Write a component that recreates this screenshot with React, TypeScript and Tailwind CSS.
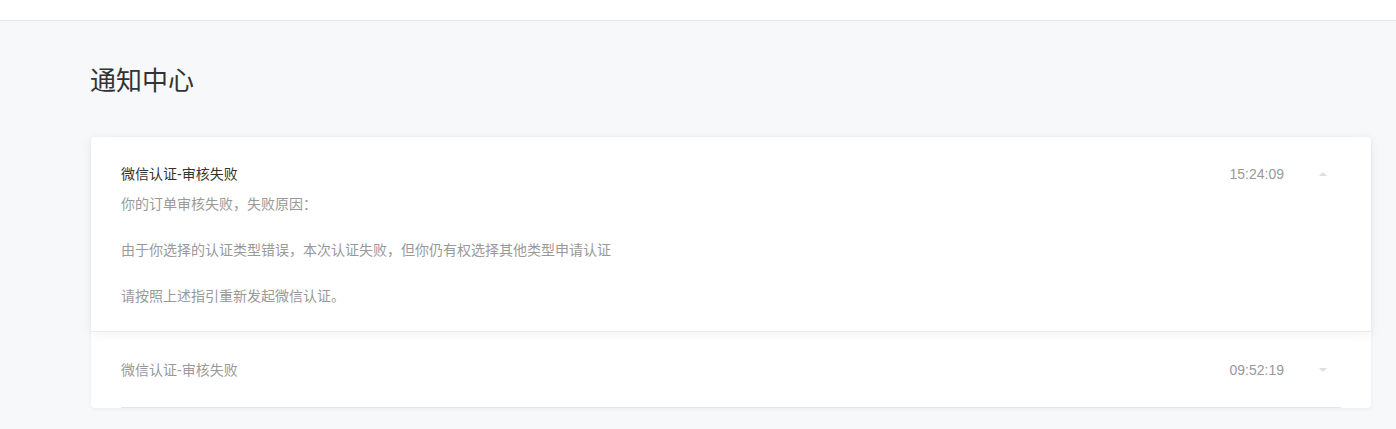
import React from 'react';

const cn = '"Liberation Sans", "Noto Sans CJK SC", sans-serif';

// 通知列表
const NOTICES = [
  {
    id: 1,
    title: '微信认证-审核失败',
    time: '15:24:09',
    open: true,
    lines: ['你的订单审核失败，失败原因：', '', '由于你选择的认证类型错误，本次认证失败，但你仍有权选择其他类型申请认证', '', '请按照上述指引重新发起微信认证。'],
  },
  { id: 2, title: '微信认证-审核失败', time: '09:52:19', open: false, lines: [] },
];

function Caret({ up }: { up: boolean }) {
  return (
    <svg width="8" height="4" viewBox="0 0 8 4" className="ml-[35px]">
      <path d={up ? 'M0 4 L4 0 L8 4 Z' : 'M0 0 L4 4 L8 0 Z'} fill="#dcdfe6" />
    </svg>
  );
}

export default function App() {
  return (
    <div className="min-h-[429px] bg-[#f7f8fa]" style={{ fontFamily: cn }}>
      <div className="h-[21px] bg-white border-b border-[#e4e6eb]" />

      <div className="pl-[90px]">
        <h1 className="pt-[45px] text-[26px] leading-[30px] text-[#333]">通知中心</h1>

        <div className="mt-[41px] ml-px w-[1280px] rounded bg-white shadow-[0_1px_4px_rgba(0,0,0,0.06)]">
          {NOTICES.map((n) =>
            n.open ? (
              <div
                key={n.id}
                className="relative z-10 rounded-t bg-white px-[30px] pt-[27px] pb-[23px] border-b border-[#ebebeb] shadow-[0_2px_12px_rgba(0,0,0,0.06)]"
              >
                <div className="flex items-center">
                  <span className="flex-1 text-[14px] leading-[20px] text-[#333]">{n.title}</span>
                  <span className="text-[14px] leading-[20px] text-[#999]">{n.time}</span>
                  <Caret up />
                  <span className="w-[14px]" />
                </div>
                <div className="mt-[9px] text-[14px] leading-[23px] text-[#999]">
                  {n.lines.map((l, i) => (
                    <p key={i} className="h-[23px]">{l}</p>
                  ))}
                </div>
              </div>
            ) : (
              <div key={n.id} className="px-[30px]">
                <div className="flex items-center border-b border-[#e6e6e6] pt-[28px] pb-[27px]">
                  <span className="flex-1 text-[14px] leading-[20px] text-[#999]">{n.title}</span>
                  <span className="text-[14px] leading-[20px] text-[#999]">{n.time}</span>
                  <Caret up={false} />
                  <span className="w-[14px]" />
                </div>
              </div>
            )
          )}
        </div>
      </div>
    </div>
  );
}
